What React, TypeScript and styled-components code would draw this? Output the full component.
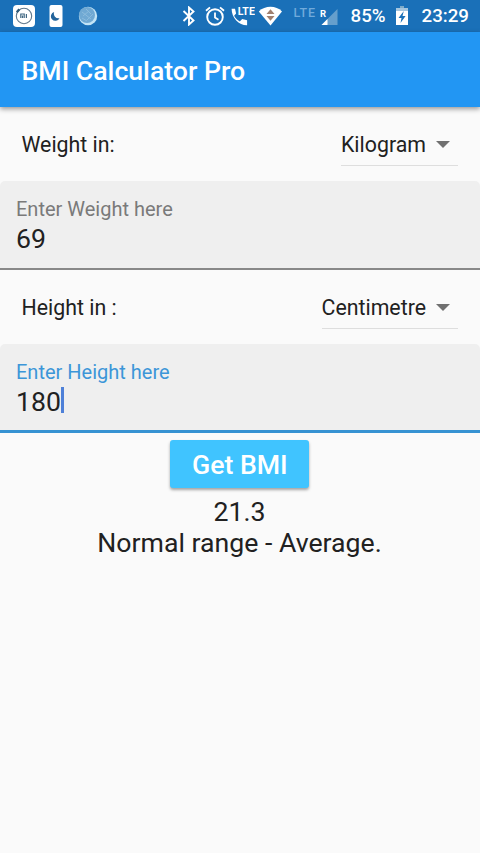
import React from 'react';
import styled, { createGlobalStyle } from 'styled-components';

const GlobalStyle = createGlobalStyle`
  * { box-sizing: border-box; }
  body { margin: 0; background: #fafafa; font-family: Roboto, sans-serif; color: #212121; }
`;

const Screen = styled.main`
  display: flex;
  flex-direction: column;
  width: 480px;
  height: 853px;
  overflow: hidden;
  background: #fafafa;
`;

const StatusBar = styled.div`
  display: flex;
  justify-content: space-between;
  height: 32px;
  flex: none;
  padding: 0 11px 0 12px;
  background: #1a70b8;
  color: #fff;
`;

const StatusGroup = styled.div`
  display: flex;
  align-items: center;
  height: 32px;
`;

const StatusIcon = styled.svg<{ $gap?: number }>`
  display: block;
  flex: none;
  margin-right: ${(p) => p.$gap ?? 0}px;
  font-family: Roboto, sans-serif;
  font-weight: 700;
`;

const StatusText = styled.span<{ $gap?: number }>`
  font-size: 18.7px;
  font-weight: 500;
  line-height: 33px;
  padding-top: 1px;
  margin-right: ${(p) => p.$gap ?? 0}px;
`;

const AppBar = styled.header`
  display: flex;
  align-items: center;
  flex: none;
  height: 75px;
  padding: 2px 21.5px 0;
  background: #2296f3;
  box-shadow: 0 2px 5px rgba(0, 0, 0, 0.4);
  z-index: 1;
`;

const Title = styled.h1`
  margin: 0;
  color: #fff;
  font-size: 26.67px;
  font-weight: 500;
  line-height: 32px;
`;

const UnitRow = styled.div<{ $height: number }>`
  display: flex;
  justify-content: space-between;
  flex: none;
  height: ${(p) => p.$height}px;
  padding: 5px 22px 0 21.5px;
  font-size: 21.33px;
`;

const UnitLabel = styled.span`
  line-height: 66px;
`;

const UnitSelect = styled.div`
  display: flex;
  align-items: center;
  gap: 10px;
  height: 54px;
  padding: 12px 8px 0 0;
  border-bottom: 1px solid #dedede;
`;

const Field = styled.div<{ $focused?: boolean }>`
  flex: none;
  height: 89px;
  padding: 16px 16px 0;
  border-radius: 5px 5px 0 0;
  background: #efefef;
  border-bottom: ${(p) => (p.$focused ? '3px solid #3692d2' : '2px solid #888')};
`;

const FieldLabel = styled.div<{ $focused?: boolean }>`
  font-size: 20px;
  line-height: 24px;
  color: ${(p) => (p.$focused ? '#3c96d8' : '#7a7a7a')};
`;

const FieldValue = styled.div`
  display: flex;
  align-items: center;
  height: 36px;
  font-size: 26.67px;
  line-height: 36px;
`;

const Caret = styled.i`
  width: 3px;
  height: 26px;
  margin-top: -5px;
  background: #4e80d8;
`;

const Button = styled.button`
  align-self: center;
  flex: none;
  width: 139px;
  height: 48px;
  margin: 7px 0.4px 0 0;
  padding: 2px 0 0;
  border: 0;
  border-radius: 3px;
  background: #40c4ff;
  color: #fff;
  font: 500 26.67px/32px Roboto, sans-serif;
  box-shadow: 0 2px 3px rgba(0, 0, 0, 0.35);
`;

const Result = styled.div`
  margin: 9px 1px 0 0;
  text-align: center;
  font-size: 26.67px;
  line-height: 31px;
`;

const Arrow = () => (
  <svg width="14" height="7" viewBox="0 0 14 7"><path d="M0 0h14L7 7z" fill="#707070" /></svg>
);

const Unit = ({ label, value, height }: { label: string; value: string; height: number }) => (
  <UnitRow $height={height}>
    <UnitLabel>{label}</UnitLabel>
    <UnitSelect><span>{value}</span><Arrow /></UnitSelect>
  </UnitRow>
);

const StatusIcons = () => (
  <StatusBar>
    <StatusGroup>
      <StatusIcon width="24" height="24" viewBox="0 0 24 24" $gap={13}>
        <rect x="1" y="1" width="22" height="22" rx="4" fill="#fff" />
        <circle cx="12" cy="12" r="7.7" fill="none" stroke="#60788c" strokeWidth="1.1" />
        <path d="M4.8 8.2l2.5-3" stroke="#2d5878" strokeWidth="2.3" />
        <path d="M8.8 14v-4h3.4v4M10.5 11.5V14M14.4 10v4" fill="none" stroke="#426883" strokeWidth="1.2" />
      </StatusIcon>
      <StatusIcon width="14" height="24" viewBox="0 0 14 24" $gap={15}>
        <rect x="0.5" y="1" width="13" height="22" rx="2" fill="#fff" />
        <path d="M5.2 8a4.5 4.5 0 1 0 5.3 6.2A4.6 4.6 0 0 1 5.2 8z" fill="#23649b" />
      </StatusIcon>
      <StatusIcon width="20" height="20" viewBox="0 0 20 20">
        <circle cx="10" cy="10" r="9.2" fill="#c2e4f6" />
        <circle cx="9" cy="9" r="8" fill="#70a9d3" />
        <path d="M4 6l9 7M8 3l5 5M4 12l5 3M11 5l-6 5M15 8l-6 6" stroke="#8bbbdd" strokeWidth="1" />
      </StatusIcon>
    </StatusGroup>
    <StatusGroup>
      <StatusIcon width="14" height="20" viewBox="0 0 14 20" $gap={9}>
        <path d="M1.5 5l10 9.5L7 18.5V1.5l4.5 4-10 9.5" fill="none" stroke="#fff" strokeWidth="1.9" />
      </StatusIcon>
      <StatusIcon width="20" height="20" viewBox="0 0 20 20" $gap={5}>
        <circle cx="10" cy="11" r="7.8" fill="none" stroke="#fff" strokeWidth="1.9" />
        <path d="M1 4.8L5 1.4M15 1.4l4 3.4M10 6.5v5l3.5 2.2" fill="none" stroke="#fff" strokeWidth="1.8" />
      </StatusIcon>
      <StatusIcon width="25" height="24" viewBox="0 0 25 24" $gap={3}>
        <path d="M1.6 4.8H5l1.1 4.6-2 2.4c1.4 2.7 3 4.3 5.7 5.6l2.4-2.3 4.9 1.2v5C9.1 21.5 1.6 14 1.6 4.8z" fill="#fff" />
        <text x="7.8" y="11" fontSize="10.5" textLength="17" fill="#fff">LTE</text>
      </StatusIcon>
      <StatusIcon width="24" height="20" viewBox="0 0 24 20" $gap={11}>
        <path d="M.8 5.4C7 -.8 18 -.8 24 5.4L12.5 19.5z" fill="#fff" />
        <path d="M8.5 8l4-4.8 4 4.8zM8.5 10h8l-4 4.8z" fill="#a08070" />
      </StatusIcon>
      <StatusIcon width="46" height="24" viewBox="0 0 46 24" $gap={12}>
        <text x="0.5" y="12.5" fontSize="12.5" textLength="21.5" fill="#70aadb" fontWeight="500">LTE</text>
        <path d="M44.5 5v16H28.5z" fill="#669fcc" />
        <path d="M34.5 15v6h-6z" fill="#fff" />
        <text x="27" y="12.5" fontSize="9.5" fill="#fff">R</text>
      </StatusIcon>
      <StatusText $gap={10}>85%</StatusText>
      <StatusIcon width="12" height="22" viewBox="0 0 12 22" $gap={14}>
        <path d="M4 1h4v3H4z" fill="#7eabc9" />
        <path d="M0 3h12v4H0z" fill="#a5c6df" />
        <path d="M0 6h12v14H0z" fill="#fff" />
        <path d="M7.8 6L2.5 13h3l-1 5 5.1-7H6.5z" fill="#1a70b8" />
      </StatusIcon>
      <StatusText>23:29</StatusText>
    </StatusGroup>
  </StatusBar>
);

export default function App() {
  return (
    <>
      <GlobalStyle />
      <Screen>
        <StatusIcons />
        <AppBar><Title>BMI Calculator Pro</Title></AppBar>
        <Unit label="Weight in:" value="Kilogram" height={74} />
        <Field>
          <FieldLabel>Enter Weight here</FieldLabel>
          <FieldValue>69</FieldValue>
        </Field>
        <Unit label="Height in :" value="Centimetre" height={74} />
        <Field $focused>
          <FieldLabel $focused>Enter Height here</FieldLabel>
          <FieldValue>180<Caret /></FieldValue>
        </Field>
        <Button>Get BMI</Button>
        <Result>
          <div>21.3</div>
          <div>Normal range - Average.</div>
        </Result>
      </Screen>
    </>
  );
}
